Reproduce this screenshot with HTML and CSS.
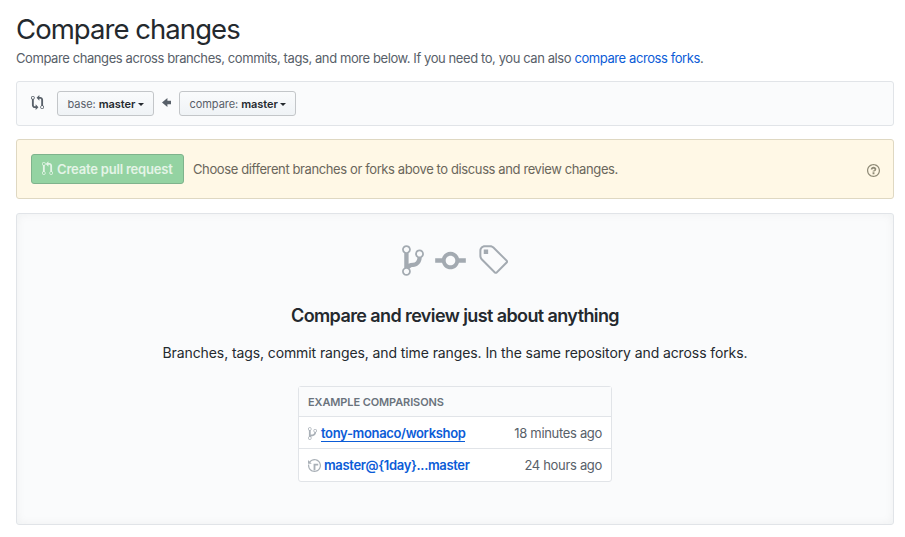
FILE: index.html
```html
<!DOCTYPE html>
<html lang="en">
<head>
<meta charset="utf-8">
<title>Compare changes</title>
<link rel="stylesheet" href="styles.css">
</head>
<body>
<main class="page">
  <h1 class="title">Compare changes</h1>
  <p class="subtitle">Compare changes across branches, commits, tags, and more below. If you need to, you can also <a href="#">compare across forks</a>.</p>

  <div class="range">
    <svg class="icon-compare" viewBox="0 0 14 16"><path d="M5 12H4c-.27-.02-.48-.11-.69-.31-.21-.2-.3-.42-.31-.69V4.72A1.993 1.993 0 0 0 2 1a1.993 1.993 0 0 0-1 3.72V11c.03.78.34 1.47.94 2.06.6.59 1.28.91 2.06.94h1v2l3-3-3-3v2zM2 1.8c.66 0 1.2.55 1.2 1.2 0 .65-.55 1.2-1.2 1.2C1.35 4.2.8 3.65.8 3c0-.65.55-1.2 1.2-1.2zm11 9.48V5c-.03-.78-.34-1.47-.94-2.06-.6-.59-1.28-.91-2.06-.94H9V0L6 3l3 3V4h1c.27.02.48.11.69.31.21.2.3.42.31.69v6.28A1.993 1.993 0 0 0 12 15a1.993 1.993 0 0 0 1-3.72zm-1 2.92c-.66 0-1.2-.55-1.2-1.2 0-.65.55-1.2 1.2-1.2.65 0 1.2.55 1.2 1.2 0 .65-.55 1.2-1.2 1.2z"/></svg>
    <button class="select select-base"><span>base: <b>master</b></span><i class="caret"></i></button>
    <svg class="icon-arrow" viewBox="0 0 10 16"><path d="M6 3L0 8l6 5v-3h4V6H6z"/></svg>
    <button class="select select-head"><span>compare: <b>master</b></span><i class="caret"></i></button>
  </div>

  <div class="notice">
    <button class="create"><svg class="icon-pr" viewBox="0 0 12 16"><path d="M11 11.28V5c-.03-.78-.34-1.47-.94-2.06C9.46 2.35 8.78 2.03 8 2H7V0L4 3l3 3V4h1c.27.02.48.11.69.31.21.2.3.42.31.69v6.28A1.993 1.993 0 0 0 10 15a1.993 1.993 0 0 0 1-3.72zm-1 2.92c-.66 0-1.2-.55-1.2-1.2 0-.65.55-1.2 1.2-1.2.65 0 1.2.55 1.2 1.2 0 .65-.55 1.2-1.2 1.2zM4 3c0-1.11-.89-2-2-2a1.993 1.993 0 0 0-1 3.72v6.56A1.993 1.993 0 0 0 2 15a1.993 1.993 0 0 0 1-3.72V4.72c.59-.34 1-.98 1-1.72zm-.8 10c0 .66-.55 1.2-1.2 1.2-.65 0-1.2-.55-1.2-1.2 0-.65.55-1.2 1.2-1.2.65 0 1.2.55 1.2 1.2zM2 4.2C1.34 4.2.8 3.65.8 3c0-.65.55-1.2 1.2-1.2.65 0 1.2.55 1.2 1.2 0 .65-.55 1.2-1.2 1.2z"/></svg><span>Create pull request</span></button>
    <span class="notice-text">Choose different branches or forks above to discuss and review changes.</span>
    <svg class="icon-help" viewBox="0 0 14 16"><path d="M6 10h2v2H6v-2zm4-3.5C10 8.64 8 9 8 9H6c0-.55.45-1 1-1h.5c.28 0 .5-.22.5-.5v-1c0-.28-.22-.5-.5-.5h-1c-.28 0-.5.22-.5.5V7H4c0-1.5 1.5-3 3-3s3 1 3 2.5zM7 2.3c3.14 0 5.7 2.56 5.7 5.7s-2.56 5.7-5.7 5.7A5.71 5.71 0 0 1 1.3 8c0-3.14 2.56-5.7 5.7-5.7zM7 1C3.14 1 0 4.14 0 8s3.14 7 7 7 7-3.14 7-7-3.14-7-7-7z"/></svg>
  </div>

  <section class="blank">
    <div class="blank-icons">
      <svg class="big-branch" viewBox="0 0 10 16"><path d="M10 5c0-1.11-.89-2-2-2a1.993 1.993 0 0 0-1 3.72v.3c-.02.52-.23.98-.63 1.38-.4.4-.86.61-1.38.63-.83.02-1.48.16-2 .45V4.72a1.993 1.993 0 0 0-1-3.72C.88 1 0 1.89 0 3a2 2 0 0 0 1 1.72v6.56c-.59.35-1 .99-1 1.72 0 1.11.89 2 2 2 1.11 0 2-.89 2-2 0-.53-.2-1-.53-1.36.09-.06.48-.41.59-.47.25-.11.56-.17.94-.17 1.05-.05 1.95-.45 2.75-1.25S8.95 7.77 9 6.73h-.02C9.59 6.37 10 5.73 10 5zM2 1.8c.66 0 1.2.55 1.2 1.2 0 .65-.55 1.2-1.2 1.2C1.35 4.2.8 3.65.8 3c0-.65.55-1.2 1.2-1.2zm0 12.41c-.66 0-1.2-.55-1.2-1.2 0-.65.55-1.2 1.2-1.2.65 0 1.2.55 1.2 1.2 0 .65-.55 1.2-1.2 1.2zm6-8c-.66 0-1.2-.55-1.2-1.2 0-.65.55-1.2 1.2-1.2.65 0 1.2.55 1.2 1.2 0 .65-.55 1.2-1.2 1.2z"/></svg>
      <svg class="big-commit" viewBox="0 0 14 16"><path d="M10.86 7c-.45-1.72-2-3-3.86-3-1.86 0-3.41 1.28-3.86 3H0v2h3.14c.45 1.72 2 3 3.86 3 1.86 0 3.41-1.28 3.86-3H14V7h-3.14zM7 10.2c-1.22 0-2.2-.98-2.2-2.2 0-1.22.98-2.2 2.2-2.2 1.22 0 2.2.98 2.2 2.2 0 1.22-.98 2.2-2.2 2.2z"/></svg>
      <svg class="big-tag" viewBox="0 0 14 16"><path d="M7.73 1.73C7.26 1.26 6.62 1 5.96 1H3.5C2.13 1 1 2.13 1 3.5v2.47c0 .66.27 1.3.73 1.77l6.06 6.06c.39.39 1.02.39 1.41 0l4.59-4.59a.996.996 0 0 0 0-1.41L7.73 1.73zM2.38 7.09c-.31-.3-.47-.7-.47-1.13V3.5c0-.88.72-1.59 1.59-1.59h2.47c.42 0 .83.16 1.13.47l6.14 6.13-4.73 4.73-6.13-6.15zM3.01 3h2v2H3V3h.01z"/></svg>
    </div>
    <h2 class="blank-title">Compare and review just about anything</h2>
    <p class="blank-text">Branches, tags, commit ranges, and time ranges. In the same repository and across forks.</p>
    <div class="examples">
      <div class="examples-head">EXAMPLE COMPARISONS</div>
      <div class="row">
        <svg class="row-branch" viewBox="0 0 10 16"><path d="M10 5c0-1.11-.89-2-2-2a1.993 1.993 0 0 0-1 3.72v.3c-.02.52-.23.98-.63 1.38-.4.4-.86.61-1.38.63-.83.02-1.48.16-2 .45V4.72a1.993 1.993 0 0 0-1-3.72C.88 1 0 1.89 0 3a2 2 0 0 0 1 1.72v6.56c-.59.35-1 .99-1 1.72 0 1.11.89 2 2 2 1.11 0 2-.89 2-2 0-.53-.2-1-.53-1.36.09-.06.48-.41.59-.47.25-.11.56-.17.94-.17 1.05-.05 1.95-.45 2.75-1.25S8.95 7.77 9 6.73h-.02C9.59 6.37 10 5.73 10 5zM2 1.8c.66 0 1.2.55 1.2 1.2 0 .65-.55 1.2-1.2 1.2C1.35 4.2.8 3.65.8 3c0-.65.55-1.2 1.2-1.2zm0 12.41c-.66 0-1.2-.55-1.2-1.2 0-.65.55-1.2 1.2-1.2.65 0 1.2.55 1.2 1.2 0 .65-.55 1.2-1.2 1.2zm6-8c-.66 0-1.2-.55-1.2-1.2 0-.65.55-1.2 1.2-1.2.65 0 1.2.55 1.2 1.2 0 .65-.55 1.2-1.2 1.2z"/></svg>
        <a class="row-link active" href="#">tony-monaco/workshop</a>
        <span class="row-time">18 minutes ago</span>
      </div>
      <div class="row">
        <svg class="row-history" viewBox="0 0 14 16"><path d="M8 13H6V6h5v2H8v5zM7 1C4.81 1 2.87 2.02 1.59 3.59L0 2v4h4L2.5 4.5C3.55 3.17 5.17 2.3 7 2.3c3.14 0 5.7 2.56 5.7 5.7s-2.56 5.7-5.7 5.7A5.71 5.71 0 0 1 1.3 8c0-.34.03-.67.09-1H.08C.03 7.33 0 7.66 0 8c0 3.86 3.14 7 7 7s7-3.14 7-7-3.14-7-7-7z"/></svg>
        <a class="row-link" href="#">master@{1day}...master</a>
        <span class="row-time">24 hours ago</span>
      </div>
    </div>
  </section>
</main>
</body>
</html>
```
FILE: styles.css
```css
* { box-sizing: border-box; }
body {
  margin: 0;
  background: #fff;
  color: #24292e;
  font-family: Inter, "Liberation Sans", sans-serif;
  font-size: 13px;
}
h1, h2, p { margin: 0; }
a { color: #0b5cd7; text-decoration: none; }
button { font-family: inherit; margin: 0; }
svg { display: block; flex: none; fill: currentColor; }

.page { width: 905px; height: 537px; padding: 12px 11px 0 16px; overflow: hidden; }
.title { font-size: 27.5px; line-height: 34px; font-weight: 400; letter-spacing: -0.95px; white-space: nowrap; }
.subtitle { margin-top: 2px; line-height: 20px; color: #586069; letter-spacing: -0.415px; white-space: nowrap; }

.range {
  display: flex;
  align-items: center;
  height: 45px;
  margin-top: 13px;
  padding: 0 14px;
  background: #fafbfc;
  border: 1px solid #e1e4e8;
  border-radius: 3px;
}
.icon-compare { width: 13px; height: 15px; margin: 0 13px 2px 0; color: #586069; }
.select {
  display: flex;
  align-items: center;
  justify-content: space-between;
  height: 25px;
  padding: 0 9px 0 9.5px;
  border: 1px solid #c3c6c9;
  border-radius: 3px;
  background: linear-gradient(#fafbfc, #eff3f6);
  color: #586069;
  font-size: 11px;
  letter-spacing: -0.05px;
  white-space: nowrap;
}
.select b { font-weight: 600; color: #24292e; }
.select-base { width: 97px; }
.select-head { width: 117px; }
.caret { border: 3px solid transparent; border-top-color: #24292e; border-bottom: 0; margin-top: 2px; }
.icon-arrow { width: 9px; height: 15px; margin: 0 8px 2px; color: #586069; }

.notice {
  display: flex;
  align-items: center;
  height: 60px;
  margin-top: 13px;
  padding: 0 13.5px 0 14px;
  background: #fff8e6;
  border: 1px solid #dfd8c2;
  border-radius: 3px;
}
.create {
  display: flex;
  align-items: center;
  width: 153px;
  height: 30px;
  padding: 0 10px;
  gap: 4px;
  border: 1px solid #7fb38c;
  border-radius: 3px;
  background: #94d3a2;
  color: #e4f4e7;
  font-size: 13px;
  font-weight: 600;
  letter-spacing: -0.2px;
  white-space: nowrap;
}
.icon-pr { width: 11px; height: 15px; margin-bottom: 2px; }
.notice-text { margin-left: 9px; color: #6a665b; letter-spacing: -0.39px; white-space: nowrap; }
.icon-help { width: 13px; height: 15px; margin: 3px 0 0 auto; color: #8f8a76; }

.blank {
  display: flex;
  flex-direction: column;
  align-items: center;
  height: 312px;
  margin-top: 14px;
  padding-top: 29px;
  background: #fafbfc;
  border: 1px solid #e1e4e8;
  border-radius: 3px;
  box-shadow: inset 0 0 10px rgba(27, 31, 35, 0.05);
}
.blank-icons { display: flex; gap: 11px; color: #a3aab1; }
.blank-icons svg { height: 35px; }
.big-branch { width: 22px; }
.big-commit { width: 31px; }
.big-tag { width: 31px; }
.blank-title { margin-top: 25px; font-size: 18px; line-height: 26px; font-weight: 600; letter-spacing: -0.6px; white-space: nowrap; }
.blank-text { margin-top: 14px; font-size: 14px; line-height: 20px; letter-spacing: -0.1px; white-space: nowrap; }

.examples {
  width: 314px;
  height: 96px;
  margin-top: 23px;
  background: #fff;
  border: 1px solid #e1e4e8;
  border-radius: 3px;
}
.examples-head {
  height: 29px;
  padding-left: 9px;
  background: #fafbfc;
  color: #6a737d;
  font-size: 11px;
  line-height: 30px;
  font-weight: 600;
  letter-spacing: -0.1px;
}
.row {
  display: flex;
  align-items: center;
  height: 32px;
  padding: 1px 9px 0;
  border-top: 1px solid #e1e4e8;
  white-space: nowrap;
}
.row svg { color: #a9b0b7; height: 15px; margin-top: 1px; }
.row .row-branch { width: 9px; margin-right: 4px; }
.row .row-history { width: 13px; margin-right: 3px; }
.row-link { font-weight: 600; line-height: 15px; letter-spacing: -0.34px; }
.row-link.active { box-shadow: 0 1px 0 #0b5cd7; }
.row-time { margin-left: auto; color: #586069; letter-spacing: -0.32px; }
```
